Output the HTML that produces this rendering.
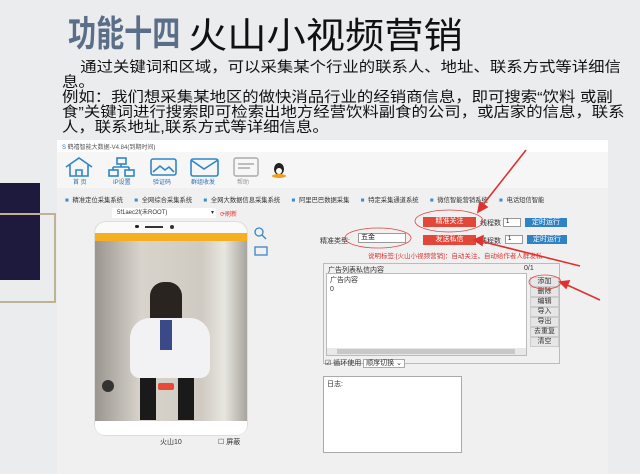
<!DOCTYPE html>
<html><head><meta charset="utf-8"><style>
*{margin:0;padding:0;box-sizing:border-box}
body{width:640px;height:474px;background:#ebecee;position:relative;overflow:hidden;font-family:"Liberation Sans","Noto Sans CJK SC",sans-serif;color:#111}
.a{position:absolute}
.t{font-size:7px;color:#333;white-space:nowrap}
.btnr{background:#e2483a;color:#fff;font-size:7px;text-align:center;line-height:10px}
.btnb{background:#2f82c4;color:#fff;font-size:7px;text-align:center;line-height:9px}
.inp{background:#fff;border:1px solid #999}
.side{left:530px;width:29px;height:10px;background:#e6e6e6;border:1px solid #ccc;font-size:7px;text-align:center;line-height:8px;color:#333}
.lb{font-size:6px;color:#2f6fb0;top:177px}
</style></head><body>
<div class="a" style="left:0;top:183px;width:40px;height:97px;background:#1e1a3e"></div>
<div class="a" style="left:-4px;top:213px;width:60px;height:90px;border:2px solid #bfb293"></div>
<div class="a" style="left:68px;top:5px;font-size:36px;font-weight:bold;color:#5b6e88;transform:scaleX(0.78);transform-origin:left top;white-space:nowrap">功能十四</div>
<div class="a" style="left:188px;top:7px;font-size:36px;color:#111;white-space:nowrap;transform:scaleX(1.09);transform-origin:left top">火山小视频营销</div>
<div class="a" style="left:62px;top:61px;width:502px;font-size:14.5px;line-height:15px;color:#111;transform:scaleX(1.13);transform-origin:left top">&nbsp;&nbsp;&nbsp;&nbsp;通过关键词和区域，可以采集某个行业的联系人、地址、联系方式等详细信息。<br>例如：我们想采集某地区的做快消品行业的经销商信息，即可搜索“饮料 或副食”关键词进行搜索即可检索出地方经营饮料副食的公司，或店家的信息，联系人，联系地址,联系方式等详细信息。</div>
<!-- app window -->
<div class="a" style="left:57px;top:140px;width:551px;height:334px;background:#f0f0f0"></div>
<div class="a" style="left:57px;top:140px;width:551px;height:12px;background:#fff"></div>
<div class="a t" style="left:62px;top:142px;font-size:6px;color:#555"><span style="color:#2a6fb8">S</span> 鹤禧智能大数据-V4.84(到期时间)</div>
<div class="a" style="left:57px;top:152px;width:551px;height:36px;background:#f6f6f6"></div>
<svg class="a" style="left:64px;top:156px" width="240" height="24">
<g fill="none" stroke="#2f86c6" stroke-width="1.6">
<path d="M2 11 L15 2 L28 11 M6 9 V20 H24 V9 M12 20 V14 H18 V20"/>
<rect x="53" y="2" width="9" height="6"/><rect x="45" y="14" width="9" height="6"/><rect x="61" y="14" width="9" height="6"/><path d="M57 8 V11 M49 11 H65 M49 11 V14 M65 11 V14"/>
<rect x="87" y="3" width="25" height="16" rx="2"/><path d="M89 16 L96 10 L101 14 L105 11 L110 16"/>
<rect x="127" y="3" width="27" height="17" rx="2"/><path d="M127 4 L140 13 L154 4"/>
</g>
<g fill="none" stroke="#aaa" stroke-width="1.4"><rect x="170" y="2" width="24" height="18" rx="2"/><path d="M174 8 H190 M174 12 H186"/></g>
<ellipse cx="215" cy="13" rx="5" ry="6" fill="#222"/><ellipse cx="215" cy="15" rx="3" ry="3" fill="#fff"/><ellipse cx="215" cy="20" rx="7" ry="2" fill="#f0a020"/>
</svg>
<div class="a t lb" style="left:73px">首 页</div>
<div class="a t lb" style="left:113px">IP设置</div>
<div class="a t lb" style="left:153px">验证码</div>
<div class="a t lb" style="left:191px">群组收发</div>
<div class="a t lb" style="left:237px;color:#999">帮助</div>
<div class="a t" style="left:65px;top:195px;font-size:6.3px;color:#333;word-spacing:2px"><span style="color:#3a8ed0">■</span> 精准定位采集系统 &nbsp;&nbsp;<span style="color:#3a8ed0">■</span> 全网综合采集系统 &nbsp;&nbsp;<span style="color:#3a8ed0">■</span> 全网大数据信息采集系统 &nbsp;&nbsp;<span style="color:#3a8ed0">■</span> 阿里巴巴数据采集 &nbsp;&nbsp;<span style="color:#3a8ed0">■</span> 特定采集通道系统 &nbsp;&nbsp;<span style="color:#3a8ed0">■</span> 微信智能营销系统 &nbsp;&nbsp;<span style="color:#3a8ed0">■</span> 电话短信智能</div>
<div class="a" style="left:112px;top:208px;width:104px;height:10px;background:#fff;font-size:6px;line-height:10px;padding-left:5px;color:#333">5f1aec2f(未ROOT) <span style="float:right;padding-right:2px">▾</span></div>
<div class="a t" style="left:220px;top:209px;font-size:6px;color:#d33">⟳刷新</div>
<!-- phone -->
<div class="a" style="left:94px;top:221px;width:154px;height:215px;background:#fafafa;border:1px solid #ddd;border-radius:12px"></div>
<div class="a" style="left:135px;top:225px;width:4px;height:3px;background:#222;border-radius:2px"></div>
<div class="a" style="left:145px;top:226px;width:18px;height:2px;background:#333"></div>
<div class="a" style="left:170px;top:225px;width:4px;height:4px;background:#333;border-radius:2px"></div>
<div class="a" style="left:95px;top:233px;width:152px;height:8px;background:#f4b020"></div>
<div class="a" style="left:95px;top:241px;width:152px;height:180px;background:linear-gradient(90deg,#9a9590,#d8d4cc 30%,#cfcac2 70%,#e8e6e0 85%,#a8a49e)"></div>
<div class="a" style="left:150px;top:282px;width:32px;height:40px;background:#2a2420;border-radius:14px 14px 4px 4px"></div>
<div class="a" style="left:130px;top:318px;width:80px;height:60px;background:#f2f2f4;border-radius:20px 20px 10px 10px"></div>
<div class="a" style="left:160px;top:320px;width:12px;height:30px;background:#3a4a88"></div>
<div class="a" style="left:140px;top:378px;width:16px;height:42px;background:#1a1a1a"></div>
<div class="a" style="left:178px;top:378px;width:16px;height:42px;background:#1a1a1a"></div>
<div class="a" style="left:102px;top:380px;width:12px;height:12px;background:#333;border-radius:6px"></div>
<div class="a" style="left:158px;top:383px;width:16px;height:7px;background:#e84a3a;border-radius:2px"></div>
<div class="a" style="left:95px;top:421px;width:152px;height:14px;background:#fff;border-radius:0 0 10px 10px"></div>
<svg class="a" style="left:253px;top:226px" width="16" height="34"><g fill="none" stroke="#3a86c8" stroke-width="1.3"><circle cx="6" cy="6" r="4"/><path d="M9 9 L13 13"/><rect x="2" y="21" width="12" height="8"/></g></svg>
<div class="a t" style="left:160px;top:437px;font-size:7px">火山10</div>
<div class="a t" style="left:218px;top:437px;font-size:7px">☐ 屏蔽</div>
<!-- controls -->
<div class="a btnr" style="left:423px;top:217px;width:53px;height:10px">精准关注</div>
<div class="a t" style="left:480px;top:218px">线程数</div>
<div class="a inp" style="left:503px;top:218px;width:18px;height:9px;font-size:6px;line-height:7px;padding-left:2px">1</div>
<div class="a btnb" style="left:525px;top:218px;width:42px;height:9px">定时运行</div>
<div class="a t" style="left:320px;top:236px">精准类型:</div>
<div class="a inp" style="left:358px;top:233px;width:48px;height:10px;font-size:7px;line-height:8px;padding-left:2px">五金</div>
<div class="a btnr" style="left:423px;top:235px;width:53px;height:10px">发送私信</div>
<div class="a t" style="left:480px;top:236px">线程数</div>
<div class="a inp" style="left:505px;top:235px;width:18px;height:9px;font-size:6px;line-height:7px;padding-left:2px">1</div>
<div class="a btnb" style="left:527px;top:235px;width:40px;height:9px">定时运行</div>
<div class="a t" style="left:368px;top:250px;color:#d33;font-size:6.5px">说明标签:[火山小视频营销]：自动关注，自动给作者人群发私</div>
<div class="a" style="left:323px;top:263px;width:237px;height:101px;border:1px solid #bbb"></div>
<div class="a t" style="left:328px;top:265px">广告列表私信内容</div>
<div class="a t" style="left:524px;top:265px">0/1</div>
<div class="a" style="left:326px;top:273px;width:201px;height:83px;background:#fff;border:1px solid #bbb"></div>
<div class="a t" style="left:330px;top:276px;line-height:9px">广告内容<br>0</div>
<div class="a" style="left:327px;top:348px;width:199px;height:7px;background:#e8e8e8"></div>
<div class="a" style="left:337px;top:349px;width:178px;height:5px;background:#c8c8c8"></div>
<div class="a side" style="top:277px">添加</div>
<div class="a side" style="top:287px">删除</div>
<div class="a side" style="top:297px">编辑</div>
<div class="a side" style="top:307px">导入</div>
<div class="a side" style="top:317px">导出</div>
<div class="a side" style="top:327px">去重复</div>
<div class="a side" style="top:337px">清空</div>
<div class="a t" style="left:325px;top:358px">☑ 循环使用 <span style="border:1px solid #aaa;background:#fff;padding:0 2px">顺序切换 ⌄</span></div>
<div class="a" style="left:323px;top:376px;width:139px;height:77px;background:#fff;border:1px solid #aaa"></div>
<div class="a t" style="left:327px;top:379px">日志:</div>
<svg class="a" style="left:0;top:0" width="640" height="474"><g fill="none" stroke="#d44" stroke-width="0.8">
<ellipse cx="449" cy="221" rx="34" ry="11"/><ellipse cx="378" cy="238" rx="33" ry="10"/><ellipse cx="545" cy="282" rx="16" ry="7"/></g>
<g stroke="#e03030" stroke-width="1.6" fill="#e03030">
<path d="M526 150 L482 206"/><path d="M478 212 L480 202 L487 207Z"/>
<path d="M580 266 L480 241"/><path d="M474 240 L483 236 L482 245Z"/>
<path d="M600 300 L565 284"/><path d="M560 282 L569 281 L566 288Z"/></g></svg>
</body></html>
